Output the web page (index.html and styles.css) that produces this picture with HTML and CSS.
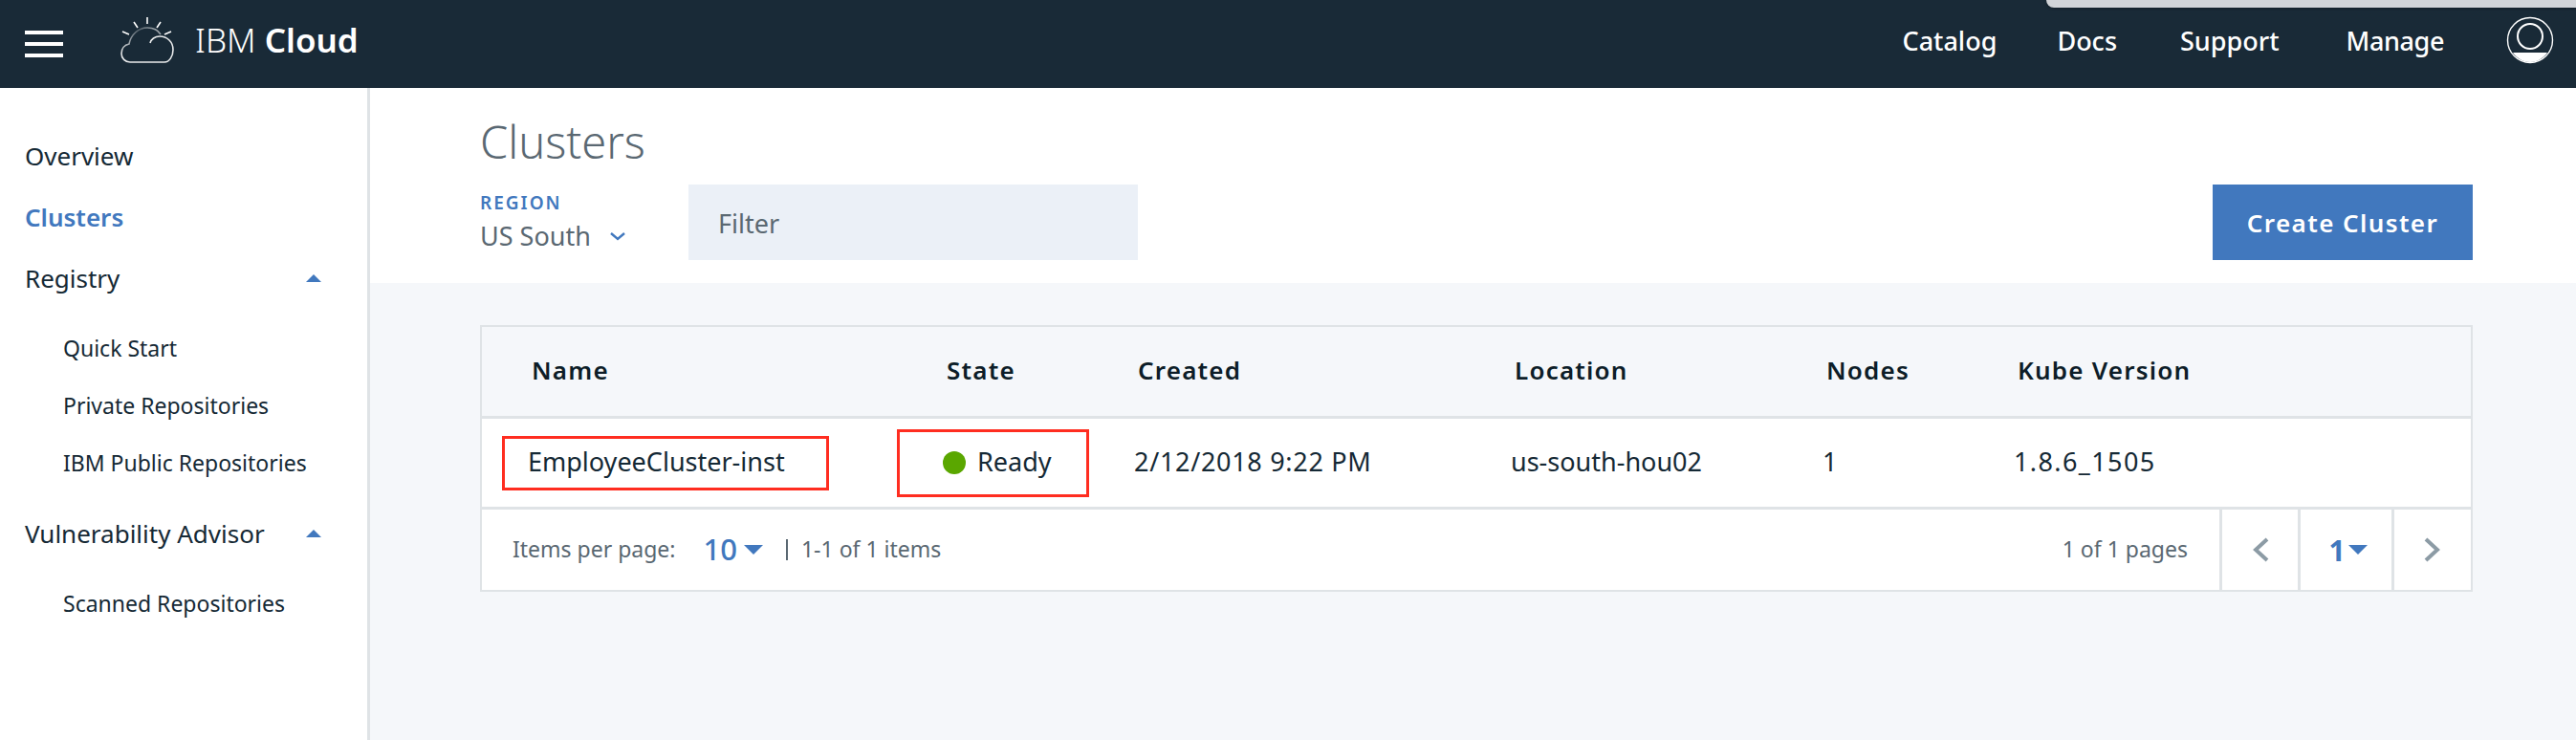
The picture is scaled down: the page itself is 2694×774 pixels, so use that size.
FILE: index.html
```html
<!DOCTYPE html>
<html lang="en">
<head>
    <meta charset="UTF-8">
    <title>IBM Cloud - Clusters</title>
    <link rel="stylesheet" href="styles.css">
</head>
<body>
<header class="topbar">
    <div class="topbar-tab"></div>
    <div class="hamburger"><span></span><span></span><span></span></div>
    <svg class="logo" width="58" height="52" viewBox="125 16 58 52" fill="none" stroke="#fff" stroke-width="1.6">
        <defs>
            <linearGradient id="fade" x1="0" y1="1" x2="1" y2="0">
                <stop offset="0" stop-color="#fff"/>
                <stop offset="0.7" stop-color="#fff" stop-opacity="0.25"/>
                <stop offset="1" stop-color="#fff" stop-opacity="0.7"/>
            </linearGradient>
        </defs>
        <path d="M154 18v7M140 23l4 6M168 23l-4 6M128 33l7 3M179 33l-7 3"/>
        <path d="M136 65h36c5 0 9-6 9-13 0-8-6-14-14-14-5 0-9 3-10 7" stroke-opacity="0.9"/>
        <path d="M136 65c-5 0-9-4-9-9 0-5 3-9 8-10 2-10 10-17 19-17 6 0 11 2 14 7" stroke="url(#fade)"/>
    </svg>
    <div class="brand">IBM <b>Cloud</b></div>
    <nav class="topnav">
        <a class="nav-catalog">Catalog</a>
        <a class="nav-docs">Docs</a>
        <a class="nav-support">Support</a>
        <a class="nav-manage">Manage</a>
    </nav>
    <svg class="avatar" width="50" height="50" viewBox="0 0 50 50" fill="none" stroke="#fff">
        <circle cx="25" cy="25" r="23.5" stroke-width="1.4"/>
        <circle cx="25" cy="21" r="13" stroke-width="2"/>
        <path d="M7 38h36c-4 6-11 10-18 10s-14-4-18-10z" fill="#fff" stroke="none"/>
    </svg>
</header>

<div class="layout">
    <aside class="sidebar">
        <a class="side-item">Overview</a>
        <a class="side-item active">Clusters</a>
        <a class="side-item">Registry<i class="caret-up"></i></a>
        <ul class="side-sub">
            <li>Quick Start</li>
            <li>Private Repositories</li>
            <li>IBM Public Repositories</li>
        </ul>
        <a class="side-item">Vulnerability Advisor<i class="caret-up"></i></a>
        <ul class="side-sub">
            <li>Scanned Repositories</li>
        </ul>
    </aside>

    <main class="content">
        <section class="page-head">
            <h1>Clusters</h1>
            <div class="controls">
                <div class="region">
                    <label>REGION</label>
                    <div class="region-value">US South
                        <svg width="16" height="9" viewBox="0 0 16 9" fill="none" stroke="#4178be" stroke-width="2.4"><path d="M1 1l7 6 7-6"/></svg>
                    </div>
                </div>
                <div class="filter">Filter</div>
                <button type="button" class="create-btn">Create Cluster</button>
            </div>
        </section>

        <section class="table">
            <div class="row head">
                <div class="name">Name</div>
                <div class="state">State</div>
                <div>Created</div>
                <div>Location</div>
                <div>Nodes</div>
                <div>Kube Version</div>
            </div>
            <div class="row body">
                <div><span class="mark mark-name">EmployeeCluster-inst</span></div>
                <div><span class="mark mark-state"><i class="dot"></i>Ready</span></div>
                <div class="cell num">2/12/2018 9:22 PM</div>
                <div class="cell">us-south-hou02</div>
                <div class="cell">1</div>
                <div class="cell num kube">1.8.6_1505</div>
            </div>
            <div class="pager">
                <span class="pager-text">Items per page:</span>
                <span class="pager-text per-value">10</span>
                <i class="caret-down"></i>
                <span class="sep"></span>
                <span class="pager-text">1-1 of 1 items</span>
                <span class="pager-text page-count">1 of 1 pages</span>
                <div class="page-cell prev">
                    <svg width="18" height="26" viewBox="0 0 18 26" fill="none" stroke="#8c9ba5" stroke-width="4"><path d="M16 2L4 13l12 11"/></svg>
                </div>
                <div class="page-cell current"><b>1</b><i class="caret-down small"></i></div>
                <div class="page-cell next">
                    <svg width="18" height="26" viewBox="0 0 18 26" fill="none" stroke="#8c9ba5" stroke-width="4"><path d="M2 2l12 11L2 24"/></svg>
                </div>
            </div>
        </section>
    </main>
</div>
</body>
</html>
```

FILE: styles.css
```css
* {
    box-sizing: border-box;
}
html, body {
    margin: 0;
    height: 100%;
    overflow: hidden;
}
body {
    font-family: "Noto Sans", Roboto, sans-serif;
    color: #152935;
    background: #f5f7fa;
    display: flex;
    flex-direction: column;
}

/* top bar */
.topbar {
    position: relative;
    height: 92px;
    flex: none;
    background: #192a37;
    color: #fff;
    display: flex;
    align-items: center;
    padding-left: 26px;
}
.topbar-tab {
    position: absolute;
    top: 0;
    right: 0;
    width: 554px;
    height: 8px;
    background: #d1d4d8;
    border-bottom-left-radius: 8px;
    box-shadow: 0 1px 3px rgba(0, 0, 0, 0.3);
}
.hamburger {
    width: 40px;
    display: flex;
    flex-direction: column;
    gap: 8px;
}
.hamburger span {
    height: 4px;
    background: #fff;
}
.logo {
    margin-left: 59px;
    margin-top: -8px;
}
.brand {
    margin-left: 21px;
    font-size: 35px;
    font-weight: 300;
    margin-top: -9px;
}
.brand b {
    font-weight: 600;
}
.topnav {
    margin-left: auto;
    display: flex;
    font-size: 27px;
    font-weight: 500;
    margin-top: -8px;
}
.nav-catalog { margin-right: 63px; }
.nav-docs { margin-right: 66px; }
.nav-support { margin-right: 70px; }
.nav-manage { letter-spacing: -0.4px; }
.avatar {
    margin: -8px 23px 0 65px;
}

/* sidebar */
.layout {
    flex: 1;
    display: flex;
    min-height: 0;
}
.sidebar {
    width: 387px;
    flex: none;
    background: #fff;
    border-right: 3px solid #dfe3e6;
    padding: 39px 0 0 26px;
}
.side-item {
    display: flex;
    align-items: center;
    justify-content: space-between;
    height: 64px;
    font-size: 26px;
    padding-right: 48px;
}
.side-item.active {
    color: #4178be;
    font-weight: 600;
}
.caret-up {
    width: 0;
    height: 0;
    border-left: 8px solid transparent;
    border-right: 8px solid transparent;
    border-bottom: 8px solid #4178be;
}
.side-sub {
    list-style: none;
    margin: 11px 0 12px;
    padding: 0 0 0 40px;
}
.side-sub li {
    height: 60px;
    line-height: 60px;
    font-size: 23px;
}

/* page head */
.content {
    flex: 1;
    min-width: 0;
}
.page-head {
    height: 204px;
    background: #fff;
    padding: 27px 108px 0 115px;
}
.page-head h1 {
    margin: 0;
    height: 74px;
    font-size: 47px;
    line-height: 58px;
    font-weight: 300;
    color: #5a6872;
}
.controls {
    display: flex;
}
.region {
    width: 218px;
    padding-top: 8px;
}
.region label {
    display: block;
    font-size: 19px;
    font-weight: 600;
    letter-spacing: 2px;
    color: #4178be;
    line-height: 22px;
}
.region-value {
    margin-top: 8px;
    font-size: 27px;
    line-height: 32px;
    color: #5a6872;
    display: flex;
    align-items: center;
    gap: 20px;
}
.filter {
    width: 470px;
    height: 79px;
    background: #ebf0f7;
    color: #5a6872;
    font-size: 27px;
    line-height: 79px;
    padding: 1px 0 0 31px;
}
.create-btn {
    margin-left: auto;
    width: 272px;
    height: 79px;
    border: 0;
    background: #4178be;
    color: #fff;
    font-family: inherit;
    font-size: 26px;
    font-weight: 600;
    letter-spacing: 1.4px;
    padding: 0;
}

/* table */
.table {
    width: 2084px;
    margin: 44px 0 0 115px;
    background: #fff;
    border: 2px solid #dfe3e6;
}
.row {
    display: grid;
    grid-template-columns: 413px 248px 394px 326px 200px 1fr;
    align-items: center;
    height: 95px;
    padding-left: 21px;
    border-bottom: 3px solid #dfe3e6;
}
.row.head {
    background: #f5f7fa;
    height: 96px;
    font-size: 26px;
    font-weight: 600;
    letter-spacing: 1.2px;
    color: #0d1d28;
}
.row.head div {
    padding: 0 0 3px 4px;
}
.row.head .name {
    padding-left: 31px;
}
.row.head .state {
    padding-left: 52px;
}
.row.body {
    font-size: 27px;
}
.cell {
    padding-bottom: 3px;
}
.cell.num {
    letter-spacing: 0.7px;
}
.cell.kube {
    letter-spacing: 1.4px;
}
.mark {
    display: flex;
    align-items: center;
    border: 3px solid #ff2d20;
    width: 342px;
    height: 57px;
    padding: 0 0 3px 24px;
}
.mark-state {
    width: 201px;
    height: 71px;
    padding-left: 45px;
}
.dot {
    width: 24px;
    height: 24px;
    border-radius: 50%;
    background: #5aa700;
    margin: 3px 12px 0 0;
}
.pager {
    display: flex;
    align-items: center;
    height: 84px;
    padding-left: 32px;
    font-size: 23px;
    color: #5a6872;
}
.pager-text {
    padding-bottom: 3px;
}
.per-value {
    margin-left: 29px;
    font-size: 31px;
    font-weight: 500;
    color: #4178be;
}
.caret-down {
    margin-left: 7px;
    width: 0;
    height: 0;
    border-left: 10px solid transparent;
    border-right: 10px solid transparent;
    border-top: 10px solid #4178be;
}
.caret-down.small {
    margin-left: 3px;
}
.sep {
    width: 2px;
    height: 22px;
    background: #5a6872;
    margin: 0 14px 0 24px;
}
.page-count {
    margin-left: auto;
    margin-right: 33px;
}
.page-cell {
    height: 100%;
    display: flex;
    align-items: center;
    justify-content: center;
    border-left: 3px solid #dfe3e6;
}
.page-cell.prev { width: 82px; }
.page-cell.current {
    width: 98px;
    padding-left: 4px;
    color: #4178be;
    font-size: 30px;
}
.page-cell.next { width: 83px; }
```
